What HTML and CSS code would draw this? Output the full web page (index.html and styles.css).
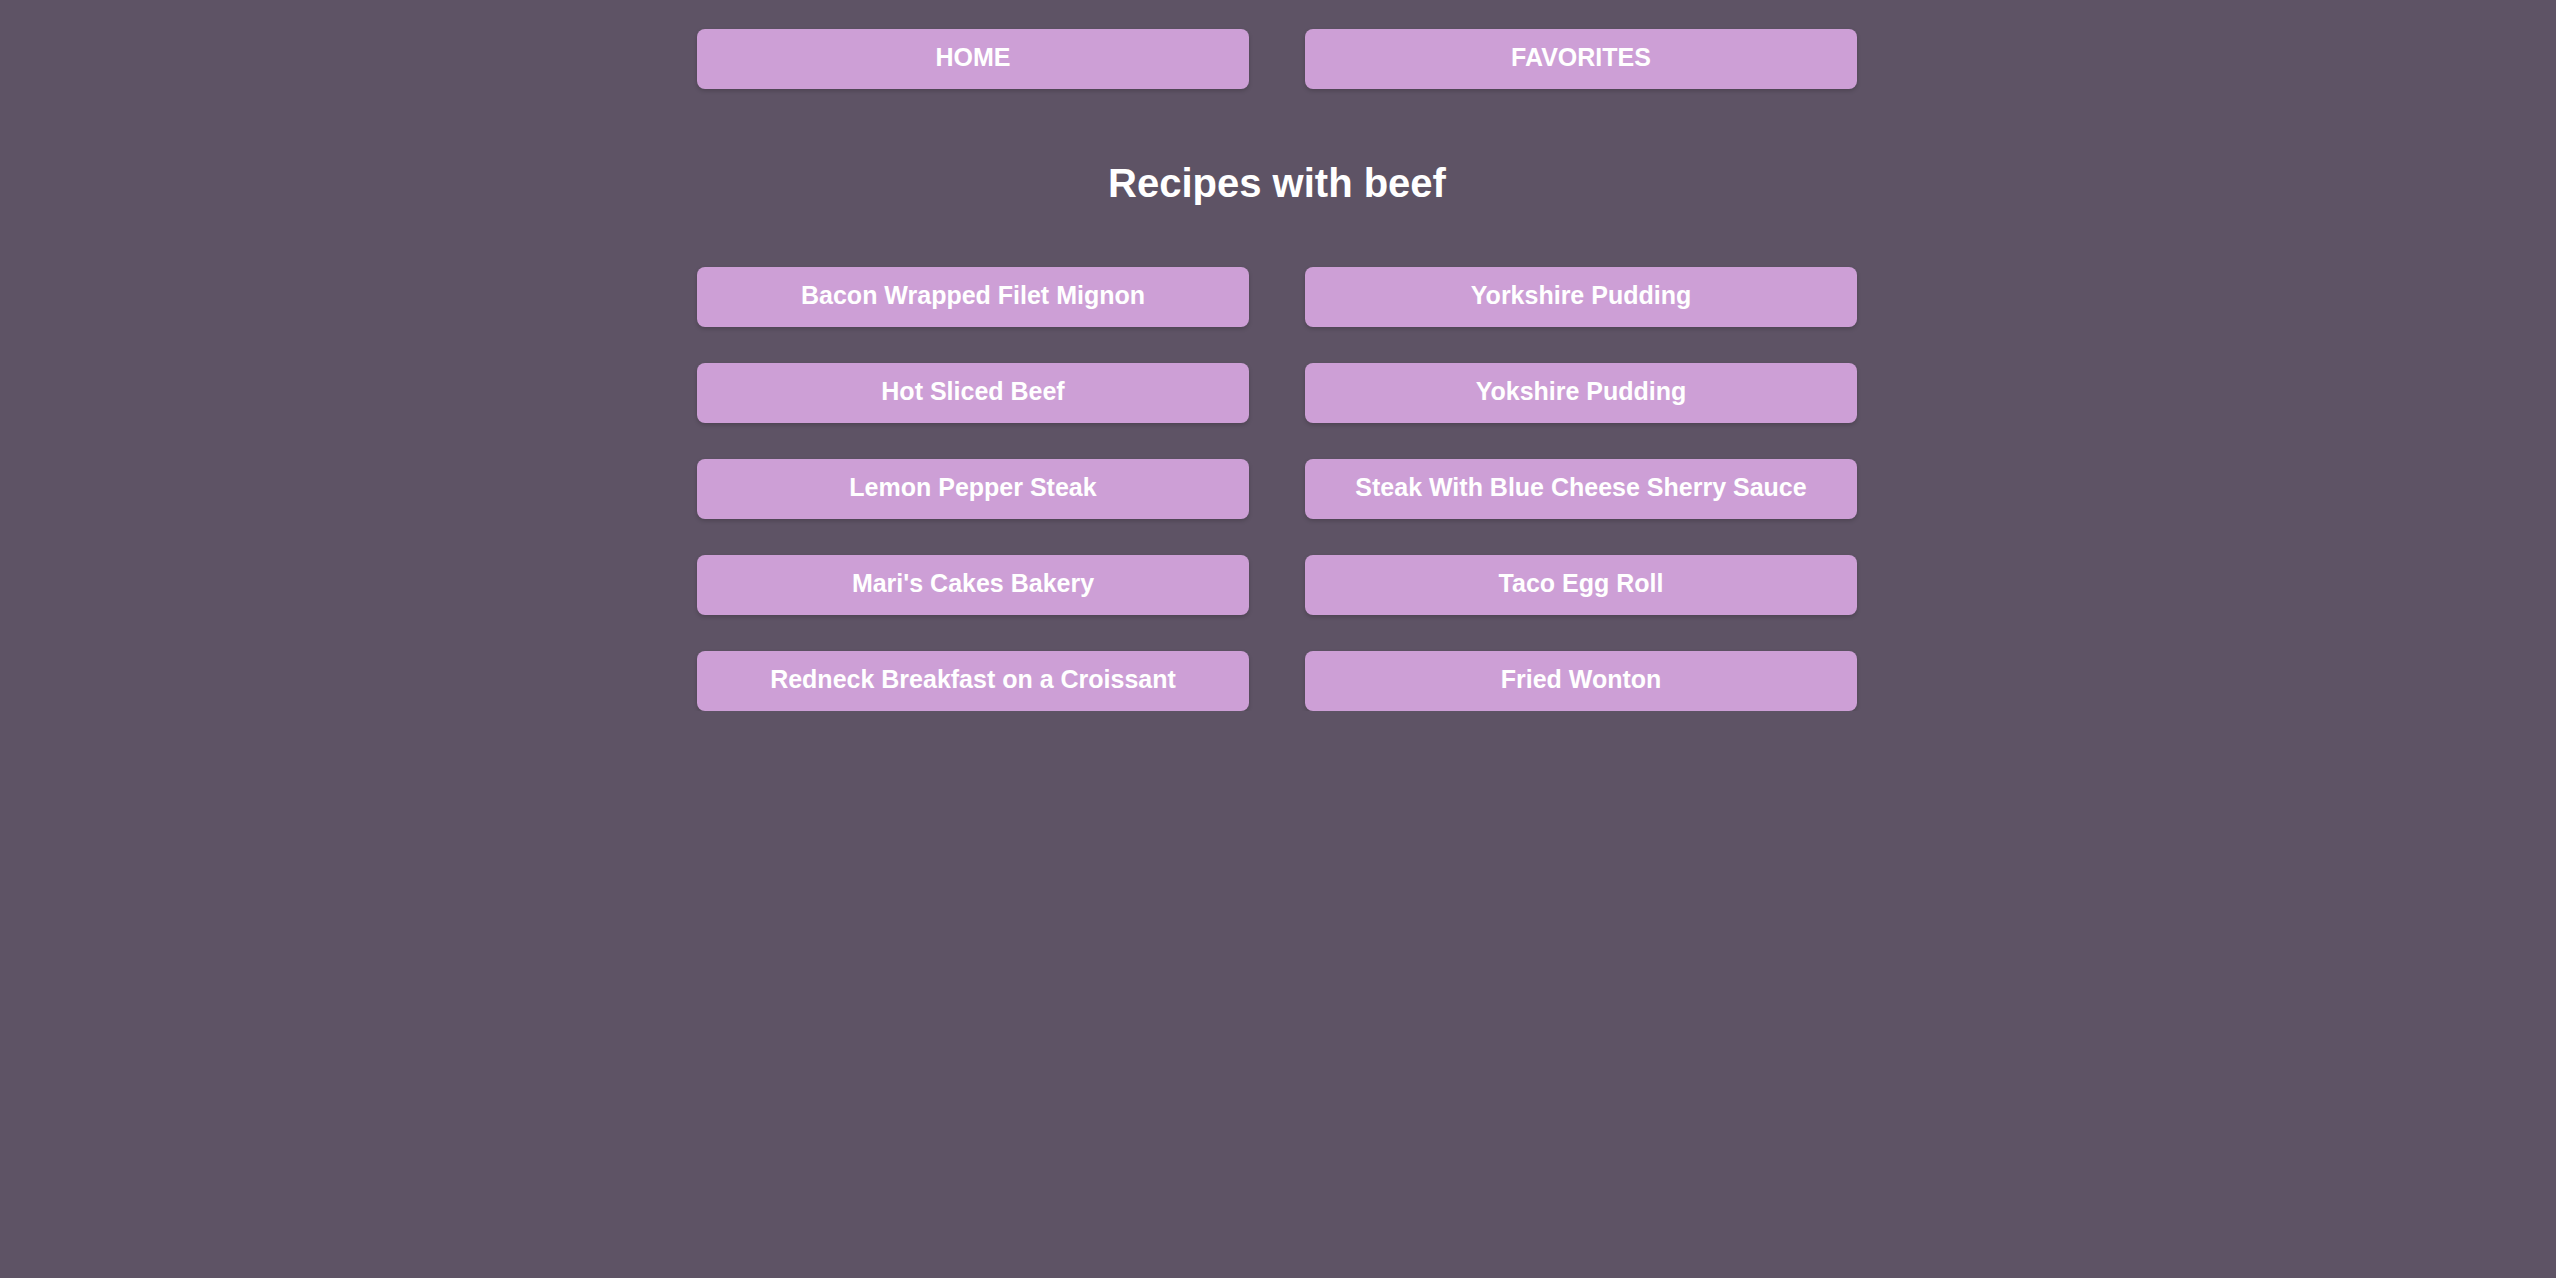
FILE: index.html
```html
<!DOCTYPE html>
<html lang="en">
<head>
<meta charset="utf-8">
<title>Recipes with beef</title>
<link rel="stylesheet" href="styles.css">
</head>
<body>
<div class="page">
  <nav class="nav grid">
    <a class="btn" href="#">HOME</a>
    <a class="btn" href="#">FAVORITES</a>
  </nav>
  <h1 class="title">Recipes with beef</h1>
  <div class="grid list">
    <a class="btn" href="#">Bacon Wrapped Filet Mignon</a>
    <a class="btn" href="#">Yorkshire Pudding</a>
    <a class="btn" href="#">Hot Sliced Beef</a>
    <a class="btn" href="#">Yokshire Pudding</a>
    <a class="btn" href="#">Lemon Pepper Steak</a>
    <a class="btn" href="#">Steak With Blue Cheese Sherry Sauce</a>
    <a class="btn" href="#">Mari's Cakes Bakery</a>
    <a class="btn" href="#">Taco Egg Roll</a>
    <a class="btn" href="#">Redneck Breakfast on a Croissant</a>
    <a class="btn" href="#">Fried Wonton</a>
  </div>
</div>
</body>
</html>
```
FILE: styles.css
```css
html, body {
  margin: 0;
  padding: 0;
  background: #5e5365;
  min-height: 100%;
}
body {
  font-family: "Liberation Sans", Arial, sans-serif;
  color: #fff;
}
.page {
  width: 1160px;
  margin: 0 auto;
  padding-top: 29px;
  transform: translateX(-1px);
}
.grid {
  display: grid;
  grid-template-columns: 1fr 1fr;
  column-gap: 56px;
  row-gap: 36px;
}
.btn {
  display: flex;
  align-items: center;
  justify-content: center;
  height: 60px;
  box-sizing: border-box;
  padding-bottom: 4px;
  background: #cd9fd6;
  border-radius: 8px;
  box-shadow: 0 2px 4px rgba(0, 0, 0, 0.18);
  color: #fff;
  font-weight: bold;
  font-size: 25px;
  text-decoration: none;
}
.title {
  margin: 71px 0 61px;
  text-align: center;
  font-size: 40px;
  line-height: 46px;
  font-weight: bold;
}
```
